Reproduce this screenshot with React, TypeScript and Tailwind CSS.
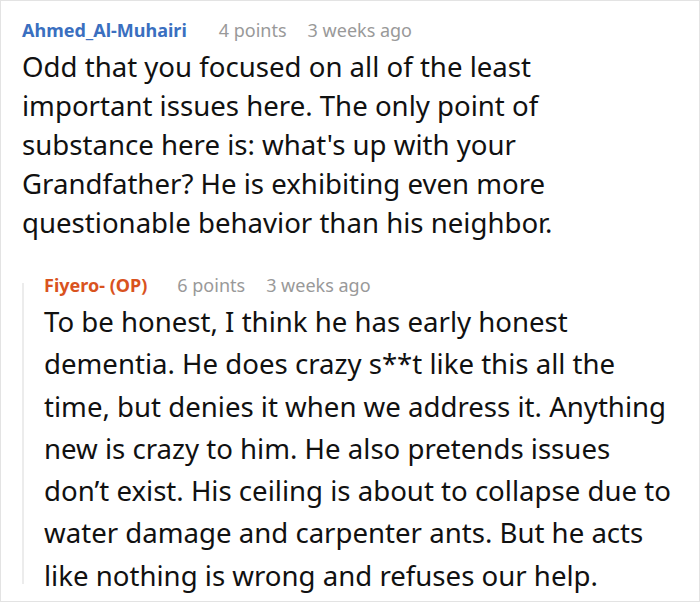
type Comment = {
  author: string;
  op?: boolean;
  points: number;
  age: string;
  body: string;
};

const parent: Comment = {
  author: 'Ahmed_Al-Muhairi',
  points: 4,
  age: '3 weeks ago',
  body: "Odd that you focused on all of the least important issues here. The only point of substance here is: what's up with your Grandfather? He is exhibiting even more questionable behavior than his neighbor.",
};

const reply: Comment = {
  author: 'Fiyero- (OP)',
  op: true,
  points: 6,
  age: '3 weeks ago',
  body: 'To be honest, I think he has early honest dementia. He does crazy s**t like this all the time, but denies it when we address it. Anything new is crazy to him. He also pretends issues don\u2019t exist. His ceiling is about to collapse due to water damage and carpenter ants. But he acts like nothing is wrong and refuses our help.',
};

function Meta({ c }: { c: Comment }) {
  return (
    <div className="flex items-center text-[18px] leading-[27px]">
      <span className={`font-bold ${c.op ? 'text-[#d9531e]' : 'text-[#3a6fc0]'}`}>{c.author}</span>
      <span className={`text-[#999] ${c.op ? 'ml-[30px]' : 'ml-[32px]'}`}>{c.points} points</span>
      <span className="ml-[21px] text-[#999]">{c.age}</span>
    </div>
  );
}

export default function App() {
  return (
    <div className="w-[700px] h-[604px] bg-white" style={{ fontFamily: '"Noto Sans", "Open Sans", sans-serif' }}>
      <div className="h-[602px] overflow-hidden border border-[#e3e3e3] pl-[21px] pr-[17px] pt-[16px] text-[#111]">
        {/* parent comment */}
        <Meta c={parent} />
        <p className="mt-[3px] mr-[42px] text-[27.6px] leading-[39px]">{parent.body}</p>

        {/* reply */}
        <div className="mt-[30px] flex">
          <div className="mt-[11px] mb-[12px] w-[2px] shrink-0 bg-[#ececec]" />
          <div className="ml-[20px] flex-1">
            <Meta c={reply} />
            <p className="mt-[1px] text-[27.6px] leading-[42.3px]">{reply.body}</p>
          </div>
        </div>
      </div>
    </div>
  );
}
